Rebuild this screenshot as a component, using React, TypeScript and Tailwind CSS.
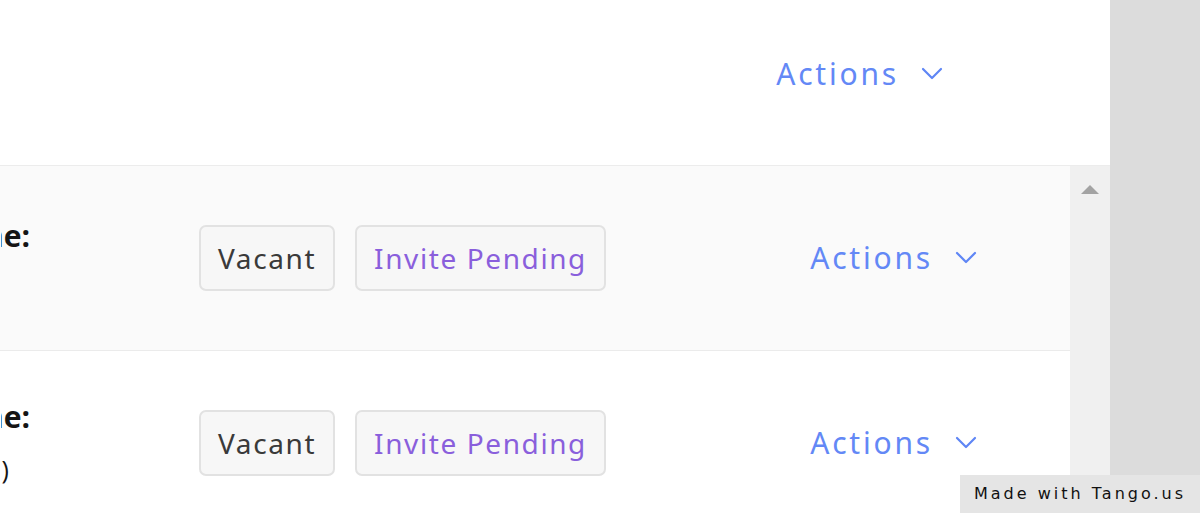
import React from "react";

type Row = {
  label: string;
  sub: string;
  bg: string;
};

const rows: Row[] = [
  { label: "Name:", sub: "\u00a0", bg: "bg-[#fafafa]" },
  { label: "Name:", sub: "(0)", bg: "bg-white" },
];

function Chevron() {
  return (
    <svg width="22" height="14" viewBox="0 0 22 14" fill="none" className="shrink-0">
      <path d="M2 2 L11 11 L20 2" stroke="#5f86f5" strokeWidth="2.2" strokeLinecap="round" strokeLinejoin="round" />
    </svg>
  );
}

function Actions() {
  return (
    <button className="flex items-center gap-[22px] text-[30px] leading-none text-[#6388f6] tracking-[2.8px]" style={{ fontFamily: "'Noto Sans', sans-serif" }}>
      <span>Actions</span>
      <Chevron />
    </button>
  );
}

function Badge({ children, tone }: { children: React.ReactNode; tone: "gray" | "purple" }) {
  return (
    <span
      className={
        "flex h-[66px] items-center rounded-[7px] border-2 border-[#e2e2e2] bg-[#f7f7f7] px-[17px] text-[28px] leading-none tracking-[1.6px] " +
        (tone === "gray" ? "text-[#3a3a3a]" : "text-[#8a5fdc]")
      }
      style={{ fontFamily: "'Noto Sans', sans-serif" }}
    >
      {children}
    </span>
  );
}

export default function App() {
  return (
    <div className="relative flex h-[513px] w-[1200px] overflow-hidden" style={{ fontFamily: "'Open Sans', sans-serif" }}>
      <div className="flex w-[1110px] flex-col bg-white">
        <div className="flex h-[166px] shrink-0 items-center justify-end border-b border-[#ececec] pb-[18px] pr-[167px]">
          <Actions />
        </div>
        <div className="flex flex-1 overflow-hidden">
          <div className="flex w-[1070px] flex-col">
            {rows.map((r, i) => (
              <div key={i} className={"flex h-[185px] shrink-0 items-center border-b border-[#ebebeb] pr-[93px] " + r.bg}>
                <div className="flex w-[31px] justify-end overflow-hidden">
                  <div className={"flex w-[30px] shrink-0 flex-col items-end overflow-hidden whitespace-nowrap pr-[1px] text-[#151515] " + (i === 0 ? "pt-[8px]" : "")}>
                    <span className="text-[30px] font-bold leading-[52px]">{r.label}</span>
                    <span className="pr-[21px] text-[25px] leading-[52px]">{r.sub}</span>
                  </div>
                </div>
                <div className="ml-[168px] flex gap-[20px]">
                  <Badge tone="gray">Vacant</Badge>
                  <Badge tone="purple">Invite Pending</Badge>
                </div>
                <div className="ml-auto">
                  <Actions />
                </div>
              </div>
            ))}
          </div>
          <div className="flex w-[40px] justify-center bg-[#f0f0f0] pt-[18px]">
            <svg width="20" height="11" viewBox="0 0 20 11">
              <path d="M10 1 L19 10 L1 10 Z" fill="#a3a3a3" />
            </svg>
          </div>
        </div>
      </div>
      <div className="flex-1 bg-[#dcdcdc]" />
      <div
        className="absolute bottom-0 right-0 flex h-[38px] w-[240px] items-center justify-center bg-[#e5e5e5] text-[16px] tracking-[3px] text-[#111]"
        style={{ fontFamily: "'DejaVu Sans', sans-serif" }}
      >
        Made with Tango.us
      </div>
    </div>
  );
}
